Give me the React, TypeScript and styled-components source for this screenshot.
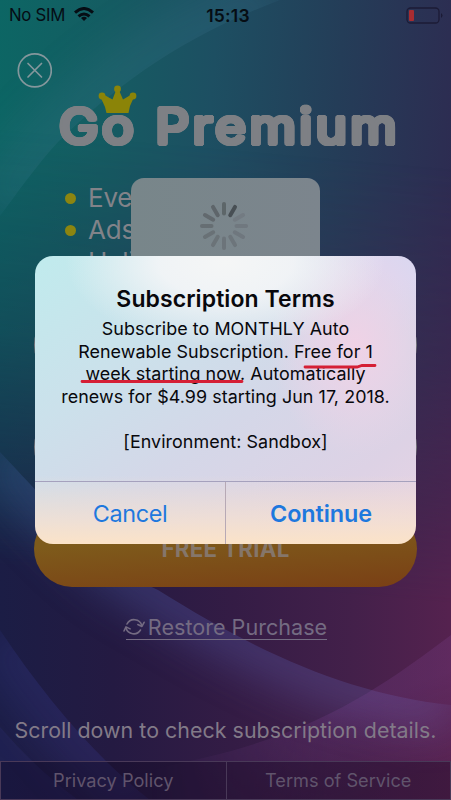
import React from 'react';
import styled, { createGlobalStyle } from 'styled-components';

const GlobalStyle = createGlobalStyle`
  * { box-sizing: border-box; }
  body { margin: 0; background: #1b1c45; overflow: hidden; }
  button { border: 0; padding: 0; background: none; font: inherit; color: inherit; }
`;

const Screen = styled.div`
  position: relative;
  width: 451px;
  height: 800px;
  overflow: hidden;
  font-family: Inter, sans-serif;
  color: #828389;
`;

const Wallpaper = styled.div`
  position: absolute;
  inset: 0;
  background: linear-gradient(94deg, #0c6664 0%, #155c62 22%, #1d4f62 43%, #243d58 68%, #30264f 100%);
  &::before {
    content: '';
    position: absolute;
    inset: 0;
    background: linear-gradient(90deg, #1b1d45 0%, #241a42 25%, #341c45 52%, #43204a 78%, #55224f 100%);
    mask-image: linear-gradient(5deg, #000 28%, rgba(0, 0, 0, .66) 40%, rgba(0, 0, 0, .3) 56%, transparent 80%);
  }
  svg { position: absolute; inset: 0; }
`;

const Page = styled.main`
  position: relative;
  display: flex;
  flex-direction: column;
  height: 100%;
`;

const StatusBar = styled.header`
  display: grid;
  grid-template-columns: 1fr auto 1fr;
  align-items: center;
  height: 30px;
  padding: 0 8px 0 9px;
  color: #060d14;
  font-size: 16.8px;
`;

const Carrier = styled.div`
  display: flex;
  align-items: center;
  gap: 9px;
  letter-spacing: -.3px;
  svg { position: relative; top: -1px; }
`;

const Clock = styled.time`
  position: relative;
  left: 2px;
  font-weight: 600;
  font-size: 17.5px;
  letter-spacing: .2px;
`;

const BatteryIcon = styled.svg`
  justify-self: end;
`;

const CloseButton = styled.button`
  display: block;
  width: 35px;
  height: 35px;
  margin: 23px 0 0 17px;
`;

/* A ring of solid shadows thickens the strokes and rounds their ends. */
const ring = Array.from({ length: 20 }, (_, i) => {
  const a = (i * Math.PI) / 10;
  return `${(Math.cos(a) * 2.4).toFixed(2)}px ${(Math.sin(a) * 2.4).toFixed(2)}px 0 #7e8085`;
}).join(', ');

const Title = styled.h1`
  position: relative;
  align-self: flex-start;
  margin: 6px 0 0 59px;
  font: 400 49.5px/64px Inter, sans-serif;
  white-space: nowrap;
  color: #7e8085;
`;

const TitleText = styled.span`
  display: inline-block;
  letter-spacing: 3.2px;
  transform: scaleX(1.07);
  transform-origin: 0 50%;
  text-shadow: ${ring};
`;

const Crown = styled.svg`
  position: absolute;
  left: 39px;
  top: -9px;
`;

const Features = styled.ul`
  display: flex;
  flex-direction: column;
  height: 125px;
  margin: 24px 0 0;
  padding: 0 0 0 65px;
  list-style: none;
  overflow: hidden;
`;

const Feature = styled.li<{ $plain?: boolean }>`
  display: flex;
  align-items: center;
  gap: 12px;
  flex: 0 0 32px;
  font: 26px/32px Inter, sans-serif;
  letter-spacing: -.2px;
  &::before {
    content: '';
    width: 11px;
    height: 11px;
    border-radius: 50%;
    background: ${p => (p.$plain ? 'transparent' : '#8c8510')};
  }
`;

const Plans = styled.div`
  display: flex;
  flex-direction: column;
  gap: 26px;
  padding: 0 34px;
`;

const PlanButton = styled.button<{ $primary?: boolean }>`
  display: flex;
  align-items: center;
  justify-content: center;
  height: 76px;
  border-radius: 38px;
  font: 700 22.3px/28px Inter, sans-serif;
  letter-spacing: .3px;
  border: ${p => (p.$primary ? '0' : '2px solid #77777d')};
  background: ${p => (p.$primary ? 'linear-gradient(176deg, #7e5b1b 35%, #7a3f15 100%)' : 'none')};
  color: #85766a;
`;

const RestoreLink = styled.button`
  display: flex;
  align-self: center;
  align-items: center;
  gap: 3px;
  height: 26px;
  margin: 27px 0 0 2px;
  font-size: 21.6px;
  line-height: 25px;
  color: #746b82;
  border-bottom: 1px solid #746b82;
  span { padding-top: 2px; }
  svg { margin-left: -3px; }
`;

const ScrollHint = styled.p`
  margin: 75px 0 0;
  text-align: center;
  font-size: 21.4px;
  line-height: 30px;
  white-space: nowrap;
  letter-spacing: .03px;
  color: #827a88;
`;

const Footer = styled.footer`
  display: grid;
  grid-template-columns: 1fr 1fr;
  height: 39px;
  margin-top: auto;
  border: 1px solid #493958;
  background: rgba(12, 4, 25, .32);
`;

const FooterLink = styled.button`
  padding-bottom: 2px;
  font-size: 18.2px;
  color: #60546c;
  & + & { border-left: 1px solid #493958; }
`;

const LoadingPanel = styled.div`
  position: absolute;
  left: 131px;
  top: 178px;
  width: 189px;
  height: 189px;
  padding: 23px 3px 0 0;
  border-radius: 13px;
  background: linear-gradient(90deg, #78868a, #7c858d);
  text-align: center;
`;

const Alert = styled.section`
  position: absolute;
  left: 35px;
  top: 256px;
  width: 381px;
  height: 288px;
  display: flex;
  flex-direction: column;
  border-radius: 18px;
  overflow: hidden;
  color: #08080c;
  background:
    linear-gradient(0deg, #fbe3c8 0%, rgba(247, 226, 207, .75) 8%, transparent 24%),
    radial-gradient(ellipse 160px 85px at 50% 2%, #f5f6f6 0%, rgba(244, 245, 247, .9) 42%, transparent 100%),
    radial-gradient(ellipse 85px 110px at 84% 31%, #f0d2e6 0%, rgba(238, 211, 231, .6) 50%, transparent 100%),
    radial-gradient(ellipse 130px 80px at 100% 0%, #dbd7f0 30%, transparent 100%),
    linear-gradient(145deg, #c0ebed 0%, #cbe1eb 30%, #d4d7e8 55%, #ddd2e5 80%, #e9d3e3 100%);
`;

const AlertBody = styled.div`
  flex: 1;
  padding-top: 29px;
  text-align: center;
`;

const AlertTitle = styled.h2`
  margin: 0;
  font-size: 23px;
  line-height: 28px;
  font-weight: 600;
  letter-spacing: .08px;
`;

const Message = styled.p`
  position: relative;
  margin: 5px 0 0;
  font-size: 17.9px;
  line-height: 22.6px;
  letter-spacing: .06px;
  white-space: pre-line;
`;

const Underlines = styled.svg`
  position: absolute;
  left: 0;
  top: 0;
`;

const Actions = styled.div`
  display: grid;
  grid-template-columns: 190px 1fr;
  height: 63px;
  border-top: 1px solid #a5a1bd;
`;

const Action = styled.button<{ $strong?: boolean }>`
  font-size: 23.4px;
  font-weight: ${p => (p.$strong ? 600 : 400)};
  letter-spacing: ${p => (p.$strong ? -0.1 : -0.35)}px;
  color: #1e78de;
  & + & { border-left: 1px solid #b7a9b5; }
`;

const ARC = 'M0 216C18 192 36 166 58 142C118 84 180 38 280 0';
const SWEEP = 'M0 452C65 521 105 566 158 590C260 654 350 694 451 705';
const LOW = 'M0 630C45 697 95 757 150 800';
const CORNER = 'M0 727Q35 768 78 800';
const GLOW = 'M451 635C385 684 320 734 185 762';

const WallpaperArt = () => (
  <svg width="451" height="800" viewBox="0 0 451 800">
    <defs>
      <filter id="soft" filterUnits="userSpaceOnUse" x="-120" y="-120" width="700" height="1040">
        <feGaussianBlur stdDeviation="20" />
      </filter>
      <linearGradient id="sweepTint" x1="0" x2="1">
        <stop stopColor="#34558a" /><stop offset=".4" stopColor="#4b4f98" /><stop offset="1" stopColor="#645190" />
      </linearGradient>
      <linearGradient id="glow" gradientUnits="userSpaceOnUse" x1="320" y1="720" x2="350" y2="800">
        <stop stopColor="#8a4ba1" stopOpacity=".2" /><stop offset="1" stopColor="#853a80" stopOpacity=".08" />
      </linearGradient>
      <linearGradient id="glowFade" x1="0" x2="1">
        <stop offset="0" stopColor="#fff" stopOpacity="0" /><stop offset=".6" stopColor="#fff" />
      </linearGradient>
      <mask id="glowMask"><rect x="150" y="600" width="301" height="200" fill="url(#glowFade)" /></mask>
      <clipPath id="arcClip"><path d={`${ARC}H0Z`} /></clipPath>
      <clipPath id="sweepClip"><path d={`${SWEEP}V800H0Z`} /></clipPath>
      <clipPath id="lowClip"><path d={`${LOW}H0Z`} /></clipPath>
    </defs>
    <g clipPath="url(#arcClip)" fill="none">
      <path d={ARC} stroke="#44809a" strokeWidth="80" opacity=".18" filter="url(#soft)" />
    </g>
    <g clipPath="url(#sweepClip)" fill="none">
      <path d={SWEEP} stroke="url(#sweepTint)" strokeWidth="60" opacity=".44" filter="url(#soft)" />
    </g>
    <g clipPath="url(#lowClip)" fill="none">
      <path d={LOW} stroke="#3f45a5" strokeWidth="70" opacity=".22" filter="url(#soft)" />
    </g>
    <path fill="#3a3fa0" opacity=".13" d={`${CORNER}H0Z`} />
    <path fill="url(#glow)" mask="url(#glowMask)" d={`${GLOW}L150 770V800H451Z`} />
  </svg>
);

const Wifi = () => (
  <svg width="20" height="15" viewBox="0 0 20 15" fill="none" stroke="#060d14" strokeWidth="3">
    <path d="M1 5.7Q10-2.6 19 5.7" />
    <path d="M4.5 9.4Q10 4.5 15.5 9.4" />
    <path d="m10 14-3-3q3-2.4 6 0Z" fill="#060d14" stroke="none" />
  </svg>
);

const Spinner = () => (
  <svg width="50" height="50" viewBox="-25 -25 50 50" strokeWidth="4" strokeLinecap="round">
    {['#5d6669', '#484f54', '#737b82', '#70787f', '#6f777e', '#6d757b', '#6c747a', '#6b7378', '#697176', '#666e73', '#62696e', '#5e656a'].map((color, i) => (
      <line key={i} y1="-12.5" y2="-22" stroke={color} transform={`rotate(${i * 30})`} />
    ))}
  </svg>
);

const RestoreIcon = () => (
  <svg width="22" height="20" viewBox="0 0 22 20" fill="none" stroke="#746b82" strokeWidth="1.6" strokeLinecap="round" strokeLinejoin="round">
    <path d="M4 7A8 8 0 0 1 18.8 8.5M17.5 13A8 8 0 0 1 3 11" />
    <path d="m14.8 7.5 4.1 2 2.2-4.2M1 14l2-4.1 4.1 2" />
  </svg>
);

export default function App() {
  return (
    <Screen>
      <GlobalStyle />
      <Wallpaper><WallpaperArt /></Wallpaper>
      <Page>
        <StatusBar>
          <Carrier>No SIM<Wifi /></Carrier>
          <Clock>15:13</Clock>
          <BatteryIcon width="37" height="17" viewBox="0 0 37 17">
            <rect x="1" y="1" width="32" height="15" rx="3.5" fill="none" stroke="#1c1b36" strokeWidth="1.3" />
            <rect x="3" y="3" width="5" height="11" rx="1" fill="#a72c31" />
            <path d="M35 6q3 2.5 0 5Z" fill="#1c1b36" />
          </BatteryIcon>
        </StatusBar>
        <CloseButton aria-label="Close">
          <svg width="35" height="35" viewBox="0 0 35 35" fill="none" stroke="#84979c" strokeWidth="1.7" strokeLinecap="round">
            <circle cx="17.8" cy="17.4" r="16.5" /><path d="m11 10.5 13.5 13.5M24.5 10.5 11 24" />
          </svg>
        </CloseButton>
        <Title>
          <TitleText>Go Premium</TitleText>
          <Crown width="39" height="29" viewBox="0 0 39 29" fill="#8b8408">
            <path d="M8.5 28 7 22 2.5 12 5.5 9.5 14.5 14.5 18.5 4H20.5L25 14.5 33.5 9.5 36 12 32 21 30.5 28Z" />
            <circle cx="4" cy="11" r="3.4" /><circle cx="19.5" cy="4" r="3.4" /><circle cx="35" cy="11" r="3.4" />
          </Crown>
        </Title>
        <Features>
          <Feature>Eve</Feature>
          <Feature>Ads</Feature>
          <Feature $plain>Unli</Feature>
        </Features>
        <Plans>
          <PlanButton />
          <PlanButton />
          <PlanButton $primary>FREE TRIAL</PlanButton>
        </Plans>
        <RestoreLink><RestoreIcon /><span>Restore Purchase</span></RestoreLink>
        <ScrollHint>Scroll down to check subscription details.</ScrollHint>
        <Footer>
          <FooterLink>Privacy Policy</FooterLink>
          <FooterLink>Terms of Service</FooterLink>
        </Footer>
      </Page>
      <LoadingPanel><Spinner /></LoadingPanel>
      <Alert role="alertdialog">
        <AlertBody>
          <AlertTitle>Subscription Terms</AlertTitle>
          <Message>
            {'Subscribe to MONTHLY Auto\nRenewable Subscription. Free for 1\nweek starting now. Automatically\nrenews for $4.99 starting Jun 17, 2018.\n\n[Environment: Sandbox]'}
            <Underlines width="381" height="80" viewBox="0 0 381 80" fill="none" stroke="#d51f35" strokeWidth="2.8" strokeLinecap="round">
              <path d="M270 49H322L327 47.5H340M47 63.5H207" />
            </Underlines>
          </Message>
        </AlertBody>
        <Actions>
          <Action>Cancel</Action>
          <Action $strong>Continue</Action>
        </Actions>
      </Alert>
    </Screen>
  );
}
